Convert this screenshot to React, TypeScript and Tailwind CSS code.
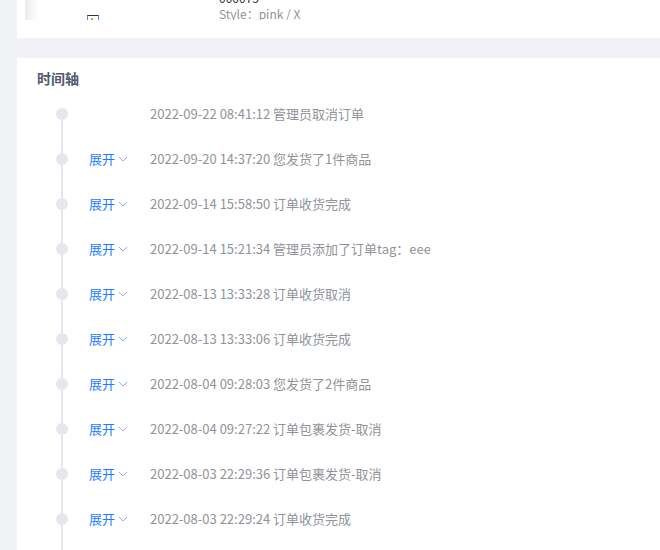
import React from 'react';

type Item = { time: string; text: string; expandable: boolean };

const items: Item[] = [
  { time: '2022-09-22 08:41:12', text: '管理员取消订单', expandable: false },
  { time: '2022-09-20 14:37:20', text: '您发货了1件商品', expandable: true },
  { time: '2022-09-14 15:58:50', text: '订单收货完成', expandable: true },
  { time: '2022-09-14 15:21:34', text: '管理员添加了订单tag：eee', expandable: true },
  { time: '2022-08-13 13:33:28', text: '订单收货取消', expandable: true },
  { time: '2022-08-13 13:33:06', text: '订单收货完成', expandable: true },
  { time: '2022-08-04 09:28:03', text: '您发货了2件商品', expandable: true },
  { time: '2022-08-04 09:27:22', text: '订单包裹发货-取消', expandable: true },
  { time: '2022-08-03 22:29:36', text: '订单包裹发货-取消', expandable: true },
  { time: '2022-08-03 22:29:24', text: '订单收货完成', expandable: true },
];

function Chevron() {
  return (
    <svg width="10" height="6" viewBox="0 0 10 6" className="ml-[3px]">
      <polyline points="1,1 5,5 9,1" fill="none" stroke="#9aa8f5" strokeWidth="1" />
    </svg>
  );
}

function TimelineRow({ item }: { item: Item }) {
  return (
    <div className="relative flex items-center h-[45px] pl-[39px]">
      {/* tail */}
      <div className="absolute left-[44px] top-[22px] h-[45px] w-[2px] bg-[#e4e7ed]" />
      <div className="relative w-[12px] h-[12px] rounded-full bg-[#e4e7ed]" />
      <div className="w-[82px] pl-[21px] flex items-center">
        {item.expandable && (
          <>
            <span className="text-[13px] text-[#1f7bff]">展开</span>
            <Chevron />
          </>
        )}
      </div>
      <span className="text-[13px] text-[#909399] whitespace-nowrap">
        {item.time} {item.text}
      </span>
    </div>
  );
}

export default function App() {
  return (
    <div
      className="w-[660px] h-[550px] overflow-hidden bg-[#f0f2f5] pl-[17px]"
      style={{ fontFamily: '"Noto Sans CJK SC", "Noto Sans", sans-serif' }}
    >
      {/* Product card (scrolled) */}
      <div className="bg-white h-[38px]">
        <div className="flex items-start h-[20px] overflow-hidden">
          <div className="ml-[8px] w-[13px] h-[20px] shrink-0 bg-gradient-to-r from-[#ececec] to-white" />
          <div className="ml-[49px] mt-[15px] w-[12px] h-[12px] shrink-0 border border-[#333] border-l-[#4a90e2] border-r-[#4a90e2] bg-white flex">
            <div className="ml-[3px] mt-[2px] w-[2px] h-[2px] bg-[#c89a3a]" />
          </div>
          <div className="ml-[120px] -mt-[10px] text-[12px] leading-[16px] shrink-0">
            <div className="text-[#333]">000075</div>
            <div className="text-[#909399]">Style：pink / X</div>
          </div>
        </div>
      </div>

      {/* Timeline card */}
      <div className="bg-white mt-[20px] h-[600px] pt-[10px]">
        <div className="pl-[20px] text-[14px] leading-[20px] font-bold text-[#515a6e]">时间轴</div>
        <div className="mt-[3px]">
          {items.map((it, i) => (
            <TimelineRow key={i} item={it} />
          ))}
        </div>
      </div>
    </div>
  );
}
